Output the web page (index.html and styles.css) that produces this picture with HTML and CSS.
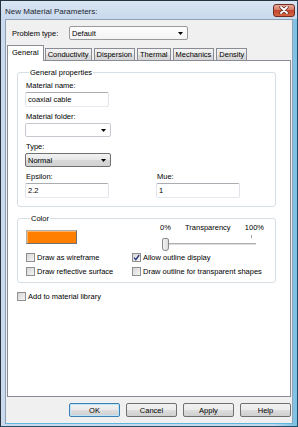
FILE: index.html
```html
<!DOCTYPE html>
<html lang="en">
<head>
  <meta charset="UTF-8" />
  <title>New Material Parameters</title>
  <link rel="stylesheet" href="styles.css">
</head>
<body>
  <div class="window">
    <div class="titlebar">
      <span class="title">New Material Parameters:</span>
      <span class="close">
        <svg width="10" height="8" viewBox="0 0 10 8">
          <path d="M2 1 L8 7 M8 1 L2 7" stroke="#5a2a22" stroke-width="3.2" stroke-linecap="round" />
          <path d="M2 1 L8 7 M8 1 L2 7" stroke="#ffffff" stroke-width="1.8" stroke-linecap="round" />
        </svg>
      </span>
    </div>

    <div class="client">
      <div class="problem-row">
        <span class="problem-label">Problem type:</span>
        <div class="combo combo-problem">
          <span>Default</span>
          <svg class="arrow" width="5" height="3" viewBox="0 0 5 3"><path d="M0 0 H5 L2.5 3 Z" fill="#000" /></svg>
        </div>
      </div>

      <div class="tabs">
        <span class="tab active">General</span>
        <span class="tab">Conductivity</span>
        <span class="tab">Dispersion</span>
        <span class="tab">Thermal</span>
        <span class="tab">Mechanics</span>
        <span class="tab">Density</span>
      </div>

      <div class="panel">
        <fieldset class="group">
          <legend>General properties</legend>

          <label class="field-label" for="matName">Material name:</label>
          <input class="text" id="matName" type="text" value="coaxial cable" />

          <span class="field-label">Material folder:</span>
          <div class="combo combo-small">
            <span></span>
            <svg class="arrow" width="5" height="3" viewBox="0 0 5 3"><path d="M0 0 H5 L2.5 3 Z" fill="#000" /></svg>
          </div>

          <span class="field-label">Type:</span>
          <div class="combo combo-small combo-list">
            <span>Normal</span>
            <svg class="arrow" width="5" height="3" viewBox="0 0 5 3"><path d="M0 0 H5 L2.5 3 Z" fill="#000" /></svg>
          </div>

          <div class="pair">
            <div>
              <label class="field-label" for="epsilon">Epsilon:</label>
              <input class="text" id="epsilon" type="text" value="2.2" />
            </div>
            <div>
              <label class="field-label" for="mue">Mue:</label>
              <input class="text" id="mue" type="text" value="1" />
            </div>
          </div>
        </fieldset>

        <fieldset class="group group-color">
          <legend>Color</legend>

          <div class="color-row">
            <span class="swatch"></span>
            <div class="transp">
              <div class="transp-labels">
                <span>0%</span>
                <span>Transparency</span>
                <span>100%</span>
              </div>
              <div class="slider">
                <span class="tick"></span>
                <span class="track"></span>
                <span class="thumb"></span>
              </div>
            </div>
          </div>

          <div class="checks">
            <span class="check"><span class="box"></span>Draw as wireframe</span>
            <span class="check"><span class="box checked">
              <svg width="7" height="7" viewBox="0 0 7 7"><path d="M1 3.6 L2.8 5.6 L6.2 1" fill="none" stroke="#26357a" stroke-width="1.3" /></svg>
            </span>Allow outline display</span>
            <span class="check"><span class="box"></span>Draw reflective surface</span>
            <span class="check"><span class="box"></span>Draw outline for transparent shapes</span>
          </div>
        </fieldset>

        <span class="check add-lib"><span class="box"></span>Add to material library</span>
      </div>

      <div class="buttons">
        <button class="btn btn-default">OK</button>
        <button class="btn">Cancel</button>
        <button class="btn">Apply</button>
        <button class="btn">Help</button>
      </div>
    </div>
  </div>
</body>
</html>
```

FILE: styles.css
```css
body {
  margin: 0;
  font-family: 'Liberation Sans', Arial, sans-serif;
  font-size: 7.5px;
  color: #000;
}

.window {
  width: 298px;
  height: 427px;
  box-sizing: border-box;
  border: 1px solid #27333f;
  border-right-color: #24506e;
  border-bottom-color: #24506e;
  background: linear-gradient(to right, #cbdaec, #c6d7ea 92%, #79c0e4);
  display: flex;
  flex-direction: column;
}

.titlebar {
  height: 18px;
  display: flex;
  align-items: center;
  justify-content: space-between;
  padding: 0 2px 0 4px;
  background: linear-gradient(#d9e5f2, #c9d9ec);
}

.title {
  font-size: 8px;
  color: #1b2733;
  margin-top: 2px;
}

.close {
  width: 22px;
  height: 13px;
  box-sizing: border-box;
  border: 1px solid #6e2c22;
  border-radius: 3px;
  background: linear-gradient(#eaa999, #d77a66 45%, #c2452e 50%, #d4643f);
  display: flex;
  align-items: center;
  justify-content: center;
}

.client {
  flex: 1;
  margin: 0 4px 2px 4px;
  border: 1px solid #8ca0b6;
  border-bottom-color: #5fb7e0;
  background: #f0f0f0;
  display: flex;
  flex-direction: column;
}

/* problem type row */
.problem-row {
  display: flex;
  align-items: center;
  padding: 6px 0 0 6px;
}

.problem-label {
  width: 57px;
}

.combo {
  height: 14px;
  box-sizing: border-box;
  border: 1px solid #a7a7a7;
  border-radius: 2px;
  background: #fff;
  display: flex;
  align-items: center;
  justify-content: space-between;
  padding: 0 4px 0 2px;
}

.combo-problem {
  width: 119px;
  border-color: #9a9a9a;
  background: linear-gradient(#fdfdfd, #f4f4f4);
}

.combo-small {
  width: 86px;
  margin-bottom: 5px;
  border-color: #c6c9cf;
}

.combo-list {
  border-color: #707070;
  background: linear-gradient(#f2f2f2, #e6e6e6 50%, #d8d8d8 51%, #d2d2d2);
}

/* tabs */
.tabs {
  display: flex;
  align-items: flex-end;
  height: 15px;
  margin: 5px 0 0 1px;
}

.tab {
  height: 12px;
  box-sizing: border-box;
  line-height: 11px;
  padding: 0 2px;
  margin-right: 2px;
  border: 1px solid #898c95;
  border-bottom: none;
  background: linear-gradient(#f3f3f3, #ebebeb 50%, #dddddd 51%, #d6d6d6);
}

.tab.active {
  height: 16px;
  line-height: 13px;
  padding: 0 4px;
  margin-right: 1px;
  margin-bottom: -1px;
  background: #fff;
  position: relative;
}

.panel {
  flex: 1;
  margin: 0 1px 0 1px;
  border: 1px solid #898c95;
  background: #fff;
  padding: 7px 0 0 9px;
}

/* group boxes */
.group {
  width: 259px;
  box-sizing: border-box;
  margin: 0;
  border: 1px solid #d5dfe5;
  border-radius: 3px;
  padding: 4px 7px 8px 7px;
}

.group legend {
  line-height: 9px;
  padding: 0 1px;
  margin-left: 4px;
}

.group-color {
  margin-top: 7px;
  padding: 0 7px 6px 8px;
}

.field-label {
  display: block;
  line-height: 9px;
  margin: 0 0 2px 1px;
}

.text {
  display: block;
  width: 84px;
  height: 15px;
  box-sizing: border-box;
  margin: 0 0 5px 0;
  padding: 0 2px;
  border: 1px solid #e2e3ea;
  border-top-color: #abadb3;
  border-bottom-color: #e3e9ef;
  border-radius: 2px;
  font-family: inherit;
  font-size: 7.5px;
  color: #000;
  outline: none;
}

.pair {
  display: grid;
  grid-template-columns: 131px 1fr;
}

.pair .text {
  margin-bottom: 0;
}

/* color group */
.color-row {
  display: flex;
  align-items: flex-start;
}

.swatch {
  width: 51px;
  height: 14px;
  box-sizing: border-box;
  margin-top: 7px;
  border: 1px solid #adadad;
  border-right-color: #707070;
  border-bottom-color: #707070;
  background: #ff8000;
  box-shadow: inset 1px 1px 0 #ffb060;
}

.transp {
  width: 104px;
  margin-left: 83px;
}

.transp-labels {
  display: flex;
  justify-content: space-between;
  line-height: 9px;
}

.slider {
  position: relative;
  height: 16px;
  margin-top: 3px;
}

.track {
  position: absolute;
  left: 3px;
  right: 8px;
  top: 8px;
  height: 2px;
  background: #dcdcdc;
  border-top: 1px solid #b0b0b0;
  box-sizing: border-box;
}

.tick {
  position: absolute;
  left: 91px;
  top: 0;
  width: 1px;
  height: 3px;
  background: #a0a0a0;
}

.thumb {
  position: absolute;
  left: 2px;
  top: 3px;
  width: 7px;
  height: 13px;
  box-sizing: border-box;
  border: 1px solid #8a8a8a;
  border-radius: 2px 2px 3px 3px;
  background: linear-gradient(to right, #f4f4f4, #dcdcdc);
}

.checks {
  display: grid;
  grid-template-columns: 106px 1fr;
  row-gap: 5px;
  margin-top: 2px;
}

.check {
  display: flex;
  align-items: center;
  gap: 2px;
  line-height: 9px;
  white-space: nowrap;
}

.box {
  width: 9px;
  height: 9px;
  box-sizing: border-box;
  border: 1px solid #8f8f8f;
  background: linear-gradient(135deg, #d6d6d6, #f6f6f6);
  display: flex;
  align-items: center;
  justify-content: center;
}

.add-lib {
  margin: 9px 0 0 0;
}

/* bottom buttons */
.buttons {
  display: flex;
  justify-content: flex-end;
  gap: 6px;
  margin: 6px 1px 6px 0;
}

.btn {
  width: 51px;
  height: 14px;
  padding: 0;
  box-sizing: border-box;
  border: 1px solid #707070;
  border-radius: 2px;
  background: linear-gradient(#f2f2f2, #ebebeb 50%, #dddddd 51%, #cfcfcf);
  font-family: inherit;
  font-size: 7.5px;
  color: #000;
}

.btn-default {
  border-color: #3c7fb1;
  box-shadow: inset 0 0 0 1px #bde6fd;
}
```
